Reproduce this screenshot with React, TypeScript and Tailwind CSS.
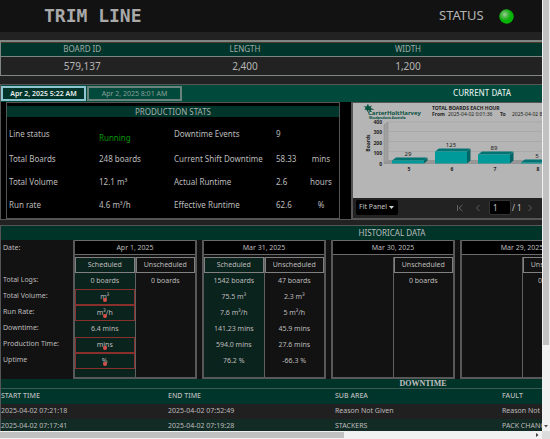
import React from "react";

type Reading = { text: string; fault?: boolean };
type Day = { date: string; scheduled?: Reading[]; unscheduled: string[] };

const labels = ["Total Logs:", "Total Volume:", "Run Rate:", "Downtime:", "Production Time:", "Uptime"];

const days: Day[] = [
  {
    date: "Apr 1, 2025",
    scheduled: [
      { text: "0 boards" },
      { text: "m³", fault: true },
      { text: "m³/h", fault: true },
      { text: "6.4 mins" },
      { text: "mins", fault: true },
      { text: "%", fault: true },
    ],
    unscheduled: ["0 boards"],
  },
  {
    date: "Mar 31, 2025",
    scheduled: [
      { text: "1542 boards" },
      { text: "75.5 m³" },
      { text: "7.6 m³/h" },
      { text: "141.23 mins" },
      { text: "594.0 mins" },
      { text: "76.2 %" },
    ],
    unscheduled: ["47 boards", "2.3 m³", "5 m³/h", "45.9 mins", "27.6 mins", "-66.3 %"],
  },
  { date: "Mar 30, 2025", unscheduled: ["0 boards"] },
  { date: "Mar 29, 2025", unscheduled: ["0 boards"] },
];

const stats = [
  ["Line status", "Running", "Downtime Events", "9", ""],
  ["Total Boards", "248 boards", "Current Shift Downtime", "58.33", "mins"],
  ["Total Volume", "12.1 m³", "Actual Runtime", "2.6", "hours"],
  ["Run rate", "4.6 m³/h", "Effective Runtime", "62.6", "%"],
];

const stops = [
  ["2025-04-02 07:21:18", "2025-04-02 07:52:49", "Reason Not Given", "Reason Not Given"],
  ["2025-04-02 07:17:41", "2025-04-02 07:19:28", "STACKERS", "PACK CHANGE"],
];

const bars = [
  { x: 39, h: 3, label: "29", hour: "5" },
  { x: 82, h: 12, label: "125", hour: "6" },
  { x: 125, h: 9, label: "89", hour: "7" },
  { x: 168, h: 1, label: "5", hour: "8" },
];

function Header() {
  return (
    <header className="flex h-8 items-center bg-[#121212]">
      <h1 className="w-[439px] shrink-0 pl-11 font-['DejaVu_Sans_Mono',monospace] text-lg font-bold text-[#a9a9a9]">TRIM LINE</h1>
      <span className="w-[60px] text-[13px] text-[#b4b4b4]">STATUS</span>
      <svg className="size-[15px]" viewBox="0 0 15 15" role="img" aria-label="Running">
        <defs>
          <radialGradient id="lamp" cx="0.38" cy="0.36" r="0.42">
            <stop offset="0" stopColor="#9ccf96" />
            <stop offset="0.5" stopColor="#4fb648" />
            <stop offset="1" stopColor="#06b306" />
          </radialGradient>
        </defs>
        <circle cx="7.5" cy="7.5" r="7.2" fill="url(#lamp)" />
      </svg>
    </header>
  );
}

function BoardTable() {
  return (
    <table className="mt-2 w-full table-fixed border border-t-2 border-[#808682] text-center">
      <thead>
        <tr className="h-[15px] border-b border-[#7b8683] bg-[#00352b] text-[8px] text-[#a3aba8]">
          <th className="w-[163px] p-0 font-normal shadow-[inset_0_1px_#4c3b30]">BOARD ID</th>
          <th className="w-[163px] p-0 font-normal shadow-[inset_0_1px_#4c3b30]">LENGTH</th>
          <th className="w-[163px] p-0 font-normal shadow-[inset_0_1px_#4c3b30]">WIDTH</th>
          <th className="p-0 shadow-[inset_0_1px_#4c3b30]" />
        </tr>
      </thead>
      <tbody>
        <tr className="h-[19px] text-[10px] leading-[16px] text-[#b5b5b5]">
          <td className="p-0">579,137</td>
          <td className="p-0">2,400</td>
          <td className="p-0">1,200</td>
          <td className="p-0" />
        </tr>
      </tbody>
    </table>
  );
}

function ProductionStats() {
  return (
    <section className="w-[334px] border border-[#555] bg-black pt-[3px]">
      <h2 className="h-[11px] bg-[#00352b] text-center text-[8px] leading-[11px] text-[#a8b0ad]">PRODUCTION STATS</h2>
      <div className="pt-[3px] pl-[2px] text-[8px] text-[#bcbcbc]">
        {stats.map(([a, b, c, d, e], i) => (
          <div key={a} className={`flex items-center ${i === 0 ? "h-7" : "h-[23px]"}`}>
            <span className="w-[90px]">{a}</span>
            <span className={`w-[75px] ${i === 0 ? "pt-2 text-[#009600]" : ""}`}>{b}</span>
            <span className="w-[102px] whitespace-nowrap">{c}</span>
            <span className="w-[30px]">{d}</span>
            <span className="w-[30px] text-center">{e}</span>
          </div>
        ))}
      </div>
    </section>
  );
}

function BoardsChart() {
  return (
    <svg className="h-[95px] w-full bg-[#b5b5b5] font-['Noto_Sans',sans-serif]" viewBox="0 0 259 95" preserveAspectRatio="xMinYMin slice">
      <path d="M15 0.5l1 3 3-1-1.500 2.500 4 1.500-4 0.500 1 2-3.500-2 1 3.500-3-4-1.500 0.500 1-2.500-2-1.500 3 0.500z" fill="#07513f" />
      <text x="15" y="12" fontSize="6" fontWeight="700" fill="#07513f">CarterHoltHarvey</text>
      <text x="16" y="16" fontSize="3" fontWeight="800" fill="#07513f">Woodproducts Australia</text>
      <g fontSize="5" fill="#222">
        <text x="79" y="7" fontWeight="700">TOTAL BOARDS EACH HOUR</text>
        <text x="79" y="13" fontWeight="700">From</text>
        <text x="95" y="13">2025-04-02 0:01:36</text>
        <text x="147" y="13" fontWeight="700">To</text>
        <text x="159" y="13">2025-04-02 8:01:36</text>
      </g>
      <path d="M31 22l4-3v38l-4 3z" fill="#a0a0a0" stroke="#8b8b8b" strokeWidth="0.500" />
      <path d="M35 19H259M35 28.500H259M35 38.500H259M35 48.500H259" stroke="#a4a4a4" strokeWidth="0.700" />
      <path d="M31 60.500l5-3H259v3z" fill="#979797" stroke="#858585" strokeWidth="0.500" />
      {bars.map((b) => (
        <g key={b.hour}>
          <path d={`M${b.x} ${60.5 - b.h}l4-3h31l-3 3z`} fill="#017373" />
          <path d={`M${b.x + 32} ${60.5 - b.h}l3.500-3v${b.h}l-3.500 3z`} fill="#016464" />
          <rect x={b.x} y={60.5 - b.h} width="32" height={b.h} fill="#009a9b" />
          <text x={b.x + 16} y={56 - b.h} fontSize="6" textAnchor="middle" fill="#222">{b.label}</text>
          <text x={b.x + 17} y="68" fontSize="5" fontWeight="700" textAnchor="middle" fill="#222">{b.hour}</text>
        </g>
      ))}
      <g fontSize="5" fontWeight="700" textAnchor="end" fill="#222">
        <text x="29" y="21">400</text>
        <text x="29" y="31">300</text>
        <text x="29" y="42">200</text>
        <text x="29" y="52">100</text>
        <text x="29" y="63">0</text>
      </g>
      <text x="17" y="40" fontSize="5" fontWeight="700" textAnchor="middle" fill="#222" transform="rotate(-90 17 40)">Boards</text>
    </svg>
  );
}

function Arrow({ d, name, className }: { d: string; name: string; className: string }) {
  return (
    <button type="button" aria-label={name} className={`flex h-4 items-center justify-center ${className}`}>
      <svg className="size-[8px]" viewBox="0 0 8 8" fill="none" stroke="#606060">
        <path d={d} />
      </svg>
    </button>
  );
}

function Report() {
  return (
    <section className="w-[262px] border border-l-2 border-[#555] bg-[#222]">
      <BoardsChart />
      <div className="flex h-5 items-center pl-[3px] text-[8px] text-[#c4c4c4]">
        <div className="relative h-[15px] w-[42px] shrink-0">
          <select aria-label="Zoom" className="block size-full appearance-none rounded-xs bg-black pl-[3px] text-[7px]">
            <option>Fit Panel</option>
          </select>
          <svg className="pointer-events-none absolute top-[6px] right-[4px] h-[3px] w-[5px]" viewBox="0 0 5 3">
            <path d="M0 0h5L2.500 3z" fill="#d0d0d0" />
          </svg>
        </div>
        <Arrow name="First page" className="ml-[54px] w-4" d="M1.500 1v6M6.500 1L3 4l3.500 3" />
        <Arrow name="Previous page" className="ml-[2px] w-4" d="M5.500 1L2.500 4l3 3" />
        <input aria-label="Page" defaultValue="1" className="ml-[3px] h-[15px] w-[22px] rounded-xs border border-[#333] bg-black pl-[3px] text-[8px]" />
        <span className="w-[11px] pl-px whitespace-nowrap">/ 1</span>
        <Arrow name="Next page" className="w-4" d="M2.500 1l3 3-3 3" />
      </div>
    </section>
  );
}

function CurrentData() {
  return (
    <section className="mt-2 border-t border-l border-[#555] bg-black">
      <div className="flex h-[17px] items-center bg-[#00493b]">
        <div className="flex w-[350px] shrink-0">
          <button type="button" className="h-[15px] w-[85px] border-2 border-[#8fc6d2] bg-[#00352b] text-[7px] leading-[11px] font-semibold whitespace-nowrap text-[#e8eeec]">
            Apr 2, 2025 5:22 AM
          </button>
          <button type="button" className="ml-px h-[15px] w-[95px] border-2 border-[#6c827c] bg-[#00493b] text-[7px] leading-[11px] whitespace-nowrap text-[#8a9f99]">
            Apr 2, 2025 8:01 AM
          </button>
        </div>
        <h2 className="w-[262px] text-center text-[8px] font-medium text-[#dde6e3]">CURRENT DATA</h2>
      </div>
      <div className="flex h-[118px] border-b border-[#555] pl-[5px]">
        <ProductionStats />
        <div className="w-[11px] shrink-0" />
        <Report />
      </div>
    </section>
  );
}

function DayCard({ day }: { day: Day }) {
  return (
    <section className="mr-[5px] flex h-[139px] w-[124px] shrink-0 flex-col border-x-2 border-b-2 border-[#585858]">
      <h3 className="h-[15px] border-y border-[#6a6a6a] bg-black text-center leading-[13px]">{day.date}</h3>
      <div className="mt-[2px] flex flex-1">
        <div className={`flex-1 ${day.scheduled ? "bg-[#0b231d]" : ""}`}>
          {day.scheduled && (
            <>
              <h4 className="h-4 border border-[#808080] leading-[14px]">Scheduled</h4>
              {day.scheduled.map((r, i) => (
                <p key={i} className={`relative h-4 leading-4 ${r.fault ? "outline-1 -outline-offset-1 outline-[#8a302c]" : ""}`}>
                  {r.text}
                  {r.fault && (
                    <span className="absolute top-[9px] left-[28px] size-1 rounded-full bg-[#d64f4b]" />
                  )}
                </p>
              ))}
            </>
          )}
        </div>
        <div className="flex-1 border-l border-[#606060]">
          <h4 className="h-4 border border-[#808080] leading-[14px]">Unscheduled</h4>
          {day.unscheduled.map((t, i) => (
            <p key={i} className="h-4 leading-4">{t}</p>
          ))}
        </div>
      </div>
    </section>
  );
}

function Historical() {
  return (
    <section className="mt-[5px] border-t border-l border-[#555] bg-[#121212] text-[7px] text-[#bcbcbc]">
      <h2 className="h-[14px] bg-[#003429]">
        <span className="block w-[782px] text-center text-[8px] leading-[14px]">HISTORICAL DATA</span>
      </h2>
      <div className="flex text-center">
        <div className="w-[72px] shrink-0 pl-[2px] text-left leading-4">
          <p className="mb-4">Date:</p>
          {labels.map((l) => (
            <p key={l}>{l}</p>
          ))}
        </div>
        {days.map((d) => (
          <DayCard key={d.date} day={d} />
        ))}
      </div>
    </section>
  );
}

function Downtime() {
  return (
    <section className="border-l border-[#555] text-[7px] text-[#bcbcbc]">
      <h2 className="h-[10px] border-b border-[#3c5a52] bg-[#003429] text-center font-['Liberation_Serif',serif] text-[8px] leading-[9px] font-bold text-[#c0c0c0]">DOWNTIME</h2>
      <table className="w-full table-fixed text-left">
        <thead>
          <tr className="h-[15px] bg-[#00352b]">
            {["START TIME", "END TIME", "SUB AREA", "FAULT"].map((h) => (
              <th key={h} className="w-[167px] p-0 font-medium">{h}</th>
            ))}
            <th className="p-0" />
          </tr>
        </thead>
        <tbody>
          {stops.map((row) => (
            <tr key={row[0]} className="h-[15px] odd:bg-[#202020] even:bg-[#122b25]">
              {row.map((cell, i) => (
                <td key={i} className="p-0">{cell}</td>
              ))}
              <td className="p-0" />
            </tr>
          ))}
        </tbody>
      </table>
    </section>
  );
}

export default function App() {
  return (
    <div className="flex h-screen w-full flex-col overflow-hidden bg-[#222] font-['Noto_Sans',sans-serif]">
      <div className="flex min-h-0 flex-1">
        <main className="min-w-0 flex-1 overflow-hidden">
          <div className="min-w-[845px]">
            <Header />
            <BoardTable />
            <CurrentData />
            <Historical />
            <Downtime />
          </div>
        </main>
        <div className="flex w-2 shrink-0 flex-col items-center justify-between bg-[#f1f1f1]">
          <div className="h-4/5 w-[6px] bg-[#c1c1c1]" />
          <svg className="mb-[3px] h-[3px] w-[4px]" viewBox="0 0 4 3">
            <path d="M0 0h4L2 2.500z" fill="#505050" />
          </svg>
        </div>
      </div>
      <div className="flex h-2 shrink-0 items-center justify-between bg-[#f1f1f1]">
        <div className="h-[6px] w-5/8 bg-[#c1c1c1]" />
        <div className="flex h-full items-center">
          <svg className="mr-[3px] h-[4px] w-[3px]" viewBox="0 0 3 4">
            <path d="M0 0l2.500 2L0 4z" fill="#404040" />
          </svg>
          <div className="h-full w-2 bg-[#dcdcdc]" />
        </div>
      </div>
    </div>
  );
}
